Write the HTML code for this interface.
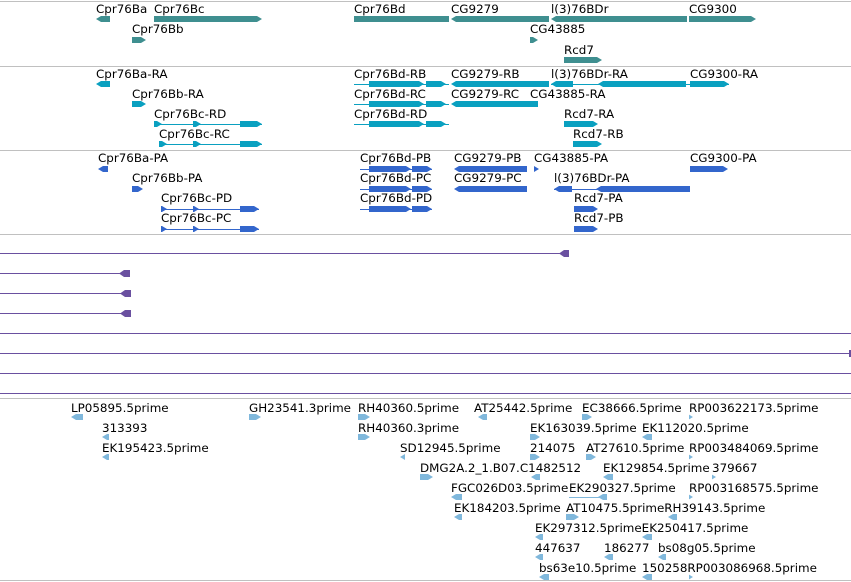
<!DOCTYPE html>
<html><head><meta charset="utf-8"><style>
body{margin:0;width:851px;height:582px;background:#fff;position:relative;overflow:hidden;font-family:"DejaVu Sans","Liberation Sans",sans-serif;font-size:11.9px;color:#000}
.t{position:absolute;line-height:14px;white-space:nowrap}
.b{position:absolute;height:6px}
.r{clip-path:polygon(0 0,calc(100% - 5px) 0,100% 50%,calc(100% - 5px) 100%,0 100%)}
.l{clip-path:polygon(5px 0,100% 0,100% 100%,5px 100%,0 50%)}
.ln{position:absolute;height:1px}
.sep{position:absolute;left:0;width:851px;height:1px;background:#c0c0c0}
.g{background:#3f8f90}.c{background:#0aa0c0}.p{background:#3366cc}.e{background:#80b8dc}.v{background:#6a50a0}
</style></head><body>
<div class="sep" style="top:1px"></div>
<div class="sep" style="top:66px"></div>
<div class="sep" style="top:150px"></div>
<div class="sep" style="top:234px"></div>
<div class="sep" style="top:398px"></div>
<div class="sep" style="top:580px"></div>

<div class="t" style="left:96px;top:2px">Cpr76Ba</div>
<div class="t" style="left:154px;top:2px">Cpr76Bc</div>
<div class="t" style="left:354px;top:2px">Cpr76Bd</div>
<div class="t" style="left:451px;top:2px">CG9279</div>
<div class="t" style="left:551px;top:2px">l(3)76BDr</div>
<div class="t" style="left:689px;top:2px">CG9300</div>
<div class="b g l" style="left:96px;top:16px;width:14px"></div>
<div class="b g r" style="left:154px;top:16px;width:108px"></div>
<div class="b g" style="left:354px;top:16px;width:95px"></div>
<div class="b g l" style="left:451px;top:16px;width:98px"></div>
<div class="b g l" style="left:551px;top:16px;width:136px"></div>
<div class="b g r" style="left:689px;top:16px;width:67px"></div>
<div class="t" style="left:132px;top:22px">Cpr76Bb</div>
<div class="t" style="left:530px;top:22px">CG43885</div>
<div class="b g r" style="left:132px;top:37px;width:14px"></div>
<div class="b g r" style="left:530px;top:37px;width:8px"></div>
<div class="t" style="left:564px;top:43px">Rcd7</div>
<div class="b g r" style="left:564px;top:57px;width:38px"></div>

<div class="t" style="left:96px;top:67px">Cpr76Ba-RA</div>
<div class="t" style="left:354px;top:67px">Cpr76Bd-RB</div>
<div class="t" style="left:451px;top:67px">CG9279-RB</div>
<div class="t" style="left:551px;top:67px">l(3)76BDr-RA</div>
<div class="t" style="left:690px;top:67px">CG9300-RA</div>
<div class="b c l" style="left:96px;top:81px;width:14px"></div>
<div class="ln c" style="left:354px;top:84px;width:95px"></div>
<div class="b c r" style="left:369px;top:81px;width:55px"></div><div class="b c r" style="left:426px;top:81px;width:20px"></div>
<div class="b c l" style="left:451px;top:81px;width:98px"></div>
<div class="ln c" style="left:551px;top:84px;width:178px"></div>
<div class="b c l" style="left:551px;top:81px;width:22px"></div><div class="b c l" style="left:598px;top:81px;width:88px"></div>
<div class="b c r" style="left:690px;top:81px;width:39px"></div>
<div class="t" style="left:132px;top:87px">Cpr76Bb-RA</div>
<div class="t" style="left:354px;top:87px">Cpr76Bd-RC</div>
<div class="t" style="left:451px;top:87px">CG9279-RC</div>
<div class="t" style="left:530px;top:87px">CG43885-RA</div>
<div class="b c r" style="left:132px;top:101px;width:14px"></div>
<div class="ln c" style="left:354px;top:104px;width:95px"></div>
<div class="b c r" style="left:369px;top:101px;width:55px"></div><div class="b c r" style="left:426px;top:101px;width:20px"></div>
<div class="b c l" style="left:451px;top:101px;width:87px"></div>
<div class="b c r" style="left:530px;top:101px;width:8px"></div>
<div class="t" style="left:154px;top:107px">Cpr76Bc-RD</div>
<div class="t" style="left:354px;top:107px">Cpr76Bd-RD</div>
<div class="t" style="left:564px;top:107px">Rcd7-RA</div>
<div class="ln c" style="left:154px;top:124px;width:108px"></div>
<div class="b c r" style="left:154px;top:121px;width:8px"></div><div class="b c r" style="left:193px;top:121px;width:8px"></div><div class="b c r" style="left:240px;top:121px;width:22px"></div>
<div class="ln c" style="left:354px;top:124px;width:95px"></div>
<div class="b c r" style="left:369px;top:121px;width:55px"></div><div class="b c r" style="left:426px;top:121px;width:20px"></div>
<div class="b c r" style="left:564px;top:121px;width:34px"></div>
<div class="t" style="left:159px;top:127px">Cpr76Bc-RC</div>
<div class="t" style="left:573px;top:127px">Rcd7-RB</div>
<div class="ln c" style="left:159px;top:144px;width:103px"></div>
<div class="b c r" style="left:159px;top:141px;width:8px"></div><div class="b c r" style="left:193px;top:141px;width:8px"></div><div class="b c r" style="left:240px;top:141px;width:22px"></div>
<div class="b c r" style="left:573px;top:141px;width:29px"></div>

<div class="t" style="left:98px;top:151px">Cpr76Ba-PA</div>
<div class="t" style="left:360px;top:151px">Cpr76Bd-PB</div>
<div class="t" style="left:454px;top:151px">CG9279-PB</div>
<div class="t" style="left:534px;top:151px">CG43885-PA</div>
<div class="t" style="left:690px;top:151px">CG9300-PA</div>
<div class="b p l" style="left:98px;top:166px;width:10px"></div>
<div class="ln p" style="left:360px;top:169px;width:72px"></div>
<div class="b p r" style="left:369px;top:166px;width:42px"></div><div class="b p r" style="left:412px;top:166px;width:20px"></div>
<div class="b p l" style="left:454px;top:166px;width:73px"></div>
<div class="b p r" style="left:534px;top:166px;width:5px"></div>
<div class="b p r" style="left:690px;top:166px;width:38px"></div>
<div class="t" style="left:132px;top:171px">Cpr76Bb-PA</div>
<div class="t" style="left:360px;top:171px">Cpr76Bd-PC</div>
<div class="t" style="left:454px;top:171px">CG9279-PC</div>
<div class="t" style="left:554px;top:171px">l(3)76BDr-PA</div>
<div class="b p r" style="left:132px;top:186px;width:11px"></div>
<div class="ln p" style="left:360px;top:189px;width:72px"></div>
<div class="b p r" style="left:369px;top:186px;width:42px"></div><div class="b p r" style="left:412px;top:186px;width:20px"></div>
<div class="b p l" style="left:454px;top:186px;width:73px"></div>
<div class="ln p" style="left:554px;top:189px;width:136px"></div>
<div class="b p l" style="left:554px;top:186px;width:18px"></div><div class="b p l" style="left:596px;top:186px;width:94px"></div>
<div class="t" style="left:161px;top:191px">Cpr76Bc-PD</div>
<div class="t" style="left:360px;top:191px">Cpr76Bd-PD</div>
<div class="t" style="left:574px;top:191px">Rcd7-PA</div>
<div class="ln p" style="left:161px;top:209px;width:98px"></div>
<div class="b p r" style="left:161px;top:206px;width:6px"></div><div class="b p r" style="left:193px;top:206px;width:6px"></div><div class="b p r" style="left:240px;top:206px;width:19px"></div>
<div class="ln p" style="left:360px;top:209px;width:72px"></div>
<div class="b p r" style="left:369px;top:206px;width:42px"></div><div class="b p r" style="left:412px;top:206px;width:20px"></div>
<div class="b p r" style="left:574px;top:206px;width:24px"></div>
<div class="t" style="left:161px;top:211px">Cpr76Bc-PC</div>
<div class="t" style="left:574px;top:211px">Rcd7-PB</div>
<div class="ln p" style="left:161px;top:229px;width:98px"></div>
<div class="b p r" style="left:161px;top:226px;width:6px"></div><div class="b p r" style="left:193px;top:226px;width:6px"></div><div class="b p r" style="left:240px;top:226px;width:19px"></div>
<div class="b p r" style="left:574px;top:226px;width:24px"></div>

<div class="ln v" style="left:0;top:253px;width:565px"></div><div class="b v l" style="left:559px;top:250px;width:10px;height:7px"></div>
<div class="ln v" style="left:0;top:273px;width:125px"></div><div class="b v l" style="left:119px;top:270px;width:11px;height:7px"></div>
<div class="ln v" style="left:0;top:293px;width:125px"></div><div class="b v l" style="left:120px;top:290px;width:11px;height:7px"></div>
<div class="ln v" style="left:0;top:313px;width:125px"></div><div class="b v l" style="left:120px;top:310px;width:11px;height:7px"></div>
<div class="ln v" style="left:0;top:333px;width:851px"></div>
<div class="ln v" style="left:0;top:353px;width:851px"></div><div class="b v" style="left:849px;top:350px;width:2px;height:7px"></div>
<div class="ln v" style="left:0;top:373px;width:851px"></div>
<div class="ln v" style="left:0;top:393px;width:851px"></div>

<div class="t" style="left:71px;top:401px">LP05895.5prime</div>
<div class="t" style="left:249px;top:401px">GH23541.3prime</div>
<div class="t" style="left:358px;top:401px">RH40360.5prime</div>
<div class="t" style="left:474px;top:401px">AT25442.5prime</div>
<div class="t" style="left:582px;top:401px">EC38666.5prime</div>
<div class="t" style="left:689px;top:401px">RP003622173.5prime</div>
<div class="b e l" style="left:71px;top:414px;width:12px"></div>
<div class="b e r" style="left:249px;top:414px;width:12px"></div>
<div class="b e r" style="left:358px;top:414px;width:12px"></div>
<div class="b e l" style="left:478px;top:414px;width:9px"></div>
<div class="b e r" style="left:582px;top:414px;width:10px"></div>
<div class="b e r" style="left:689px;top:414px;width:4px"></div>

<div class="t" style="left:102px;top:421px">313393</div>
<div class="t" style="left:358px;top:421px">RH40360.3prime</div>
<div class="t" style="left:530px;top:421px">EK163039.5prime</div>
<div class="t" style="left:642px;top:421px">EK112020.5prime</div>
<div class="b e l" style="left:102px;top:434px;width:7px"></div>
<div class="b e r" style="left:358px;top:434px;width:12px"></div>
<div class="b e r" style="left:530px;top:434px;width:10px"></div>
<div class="b e l" style="left:642px;top:434px;width:10px"></div>

<div class="t" style="left:102px;top:441px">EK195423.5prime</div>
<div class="t" style="left:400px;top:441px">SD12945.5prime</div>
<div class="t" style="left:530px;top:441px">214075</div>
<div class="t" style="left:586px;top:441px">AT27610.5prime</div>
<div class="t" style="left:689px;top:441px">RP003484069.5prime</div>
<div class="b e l" style="left:102px;top:454px;width:7px"></div>
<div class="b e l" style="left:400px;top:454px;width:5px"></div>
<div class="b e r" style="left:530px;top:454px;width:10px"></div>
<div class="b e r" style="left:586px;top:454px;width:10px"></div>
<div class="b e r" style="left:689px;top:454px;width:4px"></div>

<div class="t" style="left:420px;top:461px">DMG2A.2_1.B07.C1482512</div>
<div class="t" style="left:603px;top:461px">EK129854.5prime</div>
<div class="t" style="left:712px;top:461px">379667</div>
<div class="b e r" style="left:420px;top:474px;width:13px"></div>
<div class="b e l" style="left:531px;top:474px;width:9px"></div>
<div class="b e l" style="left:603px;top:474px;width:10px"></div>
<div class="b e r" style="left:712px;top:474px;width:4px"></div>

<div class="t" style="left:451px;top:481px">FGC026D03.5prime</div>
<div class="t" style="left:569px;top:481px">EK290327.5prime</div>
<div class="t" style="left:689px;top:481px">RP003168575.5prime</div>
<div class="b e l" style="left:451px;top:494px;width:11px"></div>
<div class="ln e" style="left:569px;top:497px;width:38px"></div><div class="b e l" style="left:598px;top:494px;width:9px"></div>
<div class="b e r" style="left:689px;top:494px;width:4px"></div>

<div class="t" style="left:454px;top:501px">EK184203.5prime</div>
<div class="t" style="left:566px;top:501px">AT10475.5primeRH39143.5prime</div>
<div class="b e l" style="left:454px;top:514px;width:8px"></div>
<div class="b e r" style="left:566px;top:514px;width:13px"></div>
<div class="b e l" style="left:668px;top:514px;width:9px"></div>

<div class="t" style="left:535px;top:521px">EK297312.5primeEK250417.5prime</div>
<div class="b e l" style="left:535px;top:534px;width:8px"></div>
<div class="b e l" style="left:642px;top:534px;width:10px"></div>

<div class="t" style="left:535px;top:541px">447637</div>
<div class="t" style="left:604px;top:541px">186277</div>
<div class="t" style="left:658px;top:541px">bs08g05.5prime</div>
<div class="b e l" style="left:535px;top:554px;width:8px"></div>
<div class="b e l" style="left:604px;top:554px;width:9px"></div>
<div class="b e l" style="left:658px;top:554px;width:8px"></div>

<div class="t" style="left:539px;top:561px">bs63e10.5prime</div>
<div class="t" style="left:642px;top:561px">150258RP003086968.5prime</div>
<div class="b e l" style="left:539px;top:574px;width:10px"></div>
<div class="b e l" style="left:642px;top:574px;width:10px"></div>
<div class="b e r" style="left:689px;top:574px;width:4px"></div>
</body></html>
